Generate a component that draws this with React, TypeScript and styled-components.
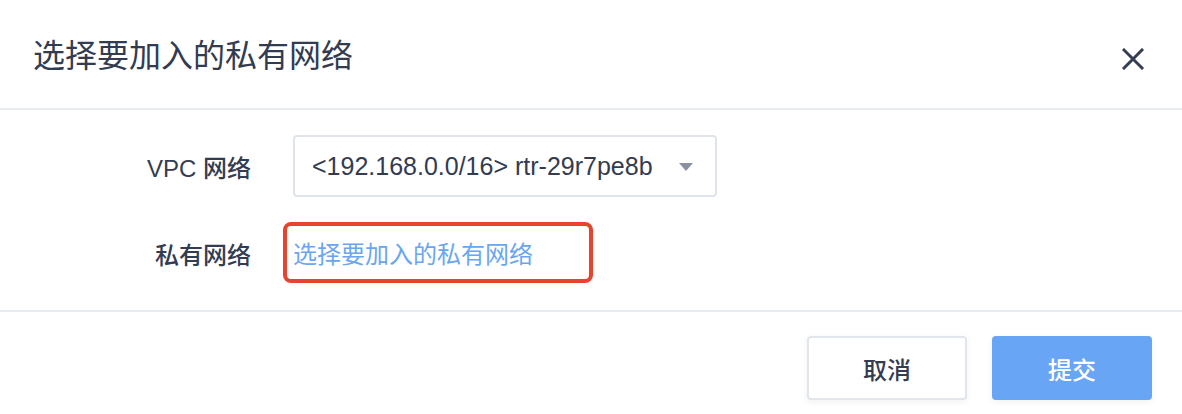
import React from "react";
import styled, { createGlobalStyle } from "styled-components";

const GlobalStyle = createGlobalStyle`
  html, body { margin: 0; padding: 0; background: #ffffff; }
  body { font-family: "Liberation Sans", "Noto Sans CJK SC", sans-serif; }
  * { box-sizing: border-box; }
`;

const Dialog = styled.div`
  width: 1182px;
  height: 414px;
  background: #ffffff;
  display: flex;
  flex-direction: column;
  overflow: hidden;
`;

const Header = styled.div`
  height: 110px;
  flex: none;
  display: flex;
  align-items: center;
  justify-content: space-between;
  padding: 0 37px 0 33px;
  border-bottom: 2px solid #e8ecf1;
`;

const Title = styled.h1`
  margin: 0;
  font-family: "Noto Sans CJK SC", sans-serif;
  font-size: 32px;
  font-weight: 400;
  color: #333b50;
  line-height: 40px;
  margin-top: -2px;
`;

const CloseButton = styled.button`
  width: 24px;
  height: 24px;
  padding: 0;
  border: none;
  background: transparent;
  display: flex;
  align-items: center;
  justify-content: center;
  margin-top: 10px;
  cursor: pointer;
`;

const Body = styled.div`
  flex: none;
  padding: 25px 0 26px;
  display: flex;
  flex-direction: column;
  gap: 25px;
  border-bottom: 2px solid #e8ecf1;
`;

const Row = styled.div`
  display: grid;
  grid-template-columns: 251px auto;
  column-gap: 42px;
  align-items: center;
  height: 62px;
`;

const Label = styled.div`
  text-align: right;
  font-size: 24px;
  font-weight: 500;
  color: #343c52;
  font-family: "Liberation Sans", "Noto Sans CJK SC", sans-serif;
`;

const Select = styled.div`
  width: 424px;
  height: 62px;
  border: 2px solid #dfe3ea;
  border-radius: 4px;
  display: flex;
  align-items: center;
  justify-content: space-between;
  padding: 0 22px 0 17px;
  font-size: 25px;
  color: #333b50;
`;

const Caret = styled.span`
  width: 0;
  height: 0;
  border-left: 7px solid transparent;
  border-right: 7px solid transparent;
  border-top: 8px solid #8a91a0;
  margin-top: 2px;
`;

const LinkWrap = styled.div`
  position: relative;
  display: flex;
  align-items: center;
  height: 62px;
`;

const Link = styled.a`
  font-family: "Noto Sans CJK SC", sans-serif;
  font-size: 24px;
  color: #6aa6f0;
  text-decoration: none;
  cursor: pointer;
  line-height: 30px;
`;

const Highlight = styled.span`
  position: absolute;
  left: -10px;
  top: 0;
  width: 310px;
  height: 61px;
  border: 4px solid #e8432c;
  border-radius: 8px;
  pointer-events: none;
`;

const Footer = styled.div`
  flex: 1;
  display: flex;
  justify-content: flex-end;
  align-items: flex-start;
  gap: 25px;
  padding: 24px 30px 0 0;
`;

const Button = styled.button<{ $primary?: boolean }>`
  width: 160px;
  height: 64px;
  border-radius: 4px;
  font-family: "Noto Sans CJK SC", sans-serif;
  font-size: 24px;
  font-weight: 500;
  cursor: pointer;
  border: ${(p) => (p.$primary ? "none" : "2px solid #e1e5ec")};
  background: ${(p) => (p.$primary ? "#69a5f5" : "#ffffff")};
  color: ${(p) => (p.$primary ? "#ffffff" : "#343c52")};
  box-shadow: 0 2px 6px rgba(60, 80, 110, 0.08);
`;

export default function App() {
  return (
    <>
      <GlobalStyle />
      <Dialog>
        <Header>
          <Title>选择要加入的私有网络</Title>
          <CloseButton aria-label="关闭">
            <svg width="22" height="22" viewBox="0 0 22 22">
              <path
                d="M2 2 L20 20 M20 2 L2 20"
                stroke="#363e54"
                strokeWidth="3"
                strokeLinecap="square"
                fill="none"
              />
            </svg>
          </CloseButton>
        </Header>
        <Body>
          <Row>
            <Label>VPC 网络</Label>
            <Select>
              <span>&lt;192.168.0.0/16&gt; rtr-29r7pe8b</span>
              <Caret />
            </Select>
          </Row>
          <Row>
            <Label>私有网络</Label>
            <LinkWrap>
              <Link>选择要加入的私有网络</Link>
              <Highlight />
            </LinkWrap>
          </Row>
        </Body>
        <Footer>
          <Button>取消</Button>
          <Button $primary>提交</Button>
        </Footer>
      </Dialog>
    </>
  );
}
